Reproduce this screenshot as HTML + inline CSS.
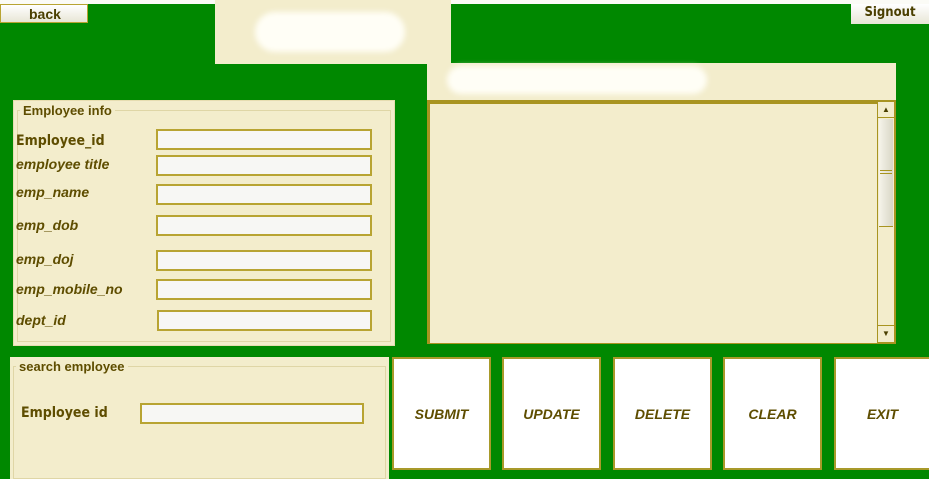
<!DOCTYPE html>
<html><head><style>
body{margin:0;width:929px;height:479px;overflow:hidden;background:#008800;position:relative;font-family:"Liberation Sans",sans-serif;}
div{position:absolute;box-sizing:border-box;}
.c{background:#f3edcc;}
.lbl{color:#5e4d00;font-weight:bold;font-style:italic;font-size:14px;left:16px;}
.in{left:156px;width:216px;height:21px;background:#f7f7f4;border:2px solid #b8a432;}
.btn{top:357px;width:99px;height:113px;background:#fff;border:2px solid #a89a2a;color:#5e4d00;font-weight:bold;font-style:italic;font-size:14px;display:flex;align-items:center;justify-content:center;}
.blur{background:#fffef6;border-radius:20px;filter:blur(3px);}
</style></head><body>
<div style="left:0;top:0;width:929px;height:4px;background:#fbfbf6"></div>
<div style="left:0;top:4px;width:88px;height:19px;background:linear-gradient(#fff,#e8e6d6);border:1px solid #b8a432;color:#4a3f00;font-weight:bold;font-size:14px;padding-left:28px;line-height:18px">back</div>
<div class="c" style="left:215px;top:0;width:236px;height:64px"></div>
<div class="blur" style="left:255px;top:12px;width:150px;height:40px"></div>
<div class="c" style="left:427px;top:63px;width:469px;height:38px"></div>
<div class="blur" style="left:447px;top:66px;width:260px;height:28px"></div>
<div style="left:851px;top:4px;width:78px;height:20px;background:linear-gradient(#fff,#e8e6d6);color:#4a3f00;font-weight:bold;font-size:13px;text-align:center;line-height:18px;font-family:'DejaVu Sans Condensed','Liberation Sans Narrow',sans-serif">Signout</div>

<div class="c" style="left:13px;top:100px;width:382px;height:246px;border:1px solid #e6ddb0"></div>
<div style="left:17px;top:110px;width:374px;height:232px;border:1px solid #dfd6a6"></div>
<div style="left:20px;top:103px;background:#f3edcc;padding:0 3px;color:#5e4d00;font-weight:bold;font-size:13px">Employee info</div>
<div class="lbl" style="top:133px;font-style:normal;font-family:'DejaVu Sans Condensed',sans-serif;font-size:14px">Employee_id</div>
<div class="in" style="top:129px"></div>
<div class="lbl" style="top:156px">employee title</div>
<div class="in" style="top:155px"></div>
<div class="lbl" style="top:184px">emp_name</div>
<div class="in" style="top:184px"></div>
<div class="lbl" style="top:217px">emp_dob</div>
<div class="in" style="top:215px"></div>
<div class="lbl" style="top:251px">emp_doj</div>
<div class="in" style="top:250px"></div>
<div class="lbl" style="top:281px">emp_mobile_no</div>
<div class="in" style="top:279px"></div>
<div class="lbl" style="top:312px">dept_id</div>
<div class="in" style="top:310px;left:157px;width:215px"></div>

<div class="c" style="left:427px;top:100px;width:469px;height:244px;border:1px solid #a89420;border-top:4px solid #a89420;border-left:3px solid #a89420"></div>
<div style="left:877px;top:101px;width:18px;height:242px;background:#f3edcc;border:1px solid #a89420"></div>
<div style="left:878px;top:102px;width:16px;height:16px;border-bottom:1px solid #a89420;color:#4a3f00;font-size:8px;text-align:center;line-height:16px">▲</div>
<div style="left:879px;top:119px;width:14px;height:108px;background:linear-gradient(90deg,#f6f4ea,#d8d6c6);border-bottom:1px solid #a89420"></div>
<div style="left:880px;top:170px;width:12px;height:4px;border-top:1px solid #a89420;border-bottom:1px solid #a89420"></div>
<div style="left:878px;top:325px;width:16px;height:16px;border-top:1px solid #a89420;color:#4a3f00;font-size:8px;text-align:center;line-height:16px">▼</div>

<div class="c" style="left:10px;top:357px;width:379px;height:122px"></div>
<div style="left:13px;top:366px;width:373px;height:113px;border:1px solid #dfd6a6"></div>
<div style="left:16px;top:359px;background:#f3edcc;padding:0 3px;color:#5e4d00;font-weight:bold;font-size:13px">search employee</div>
<div style="left:21px;top:405px;color:#5e4d00;font-weight:bold;font-size:14px;font-family:'DejaVu Sans Condensed',sans-serif">Employee id</div>
<div class="in" style="left:140px;top:403px;width:224px;height:21px"></div>

<div class="btn" style="left:392px">SUBMIT</div>
<div class="btn" style="left:502px">UPDATE</div>
<div class="btn" style="left:613px">DELETE</div>
<div class="btn" style="left:723px">CLEAR</div>
<div class="btn" style="left:834px;width:97px">EXIT</div>
</body></html>
